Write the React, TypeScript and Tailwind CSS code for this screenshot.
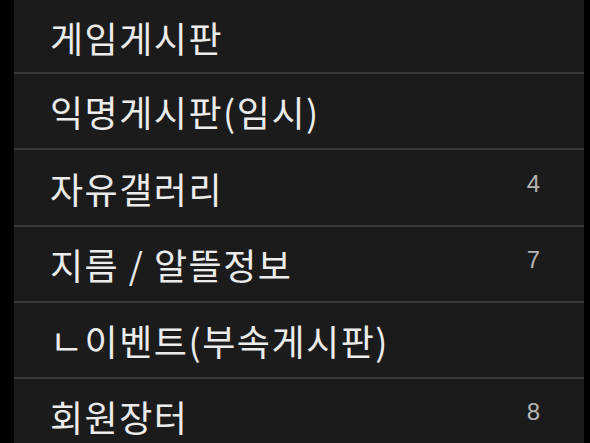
const items: { name: string; count?: number; h: string }[] = [
  { name: '게임게시판', h: 'h-[73px]' },
  { name: '익명게시판(임시)', h: 'h-[76px]' },
  { name: '자유갤러리', count: 4, h: 'h-[77px]' },
  { name: '지름 / 알뜰정보', count: 7, h: 'h-[76px]' },
  { name: 'ㄴ이벤트(부속게시판)', h: 'h-[76px]' },
  { name: '회원장터', count: 8, h: 'h-[76px]' },
]

export default function App() {
  return (
    <div className="w-[590px] h-[443px] overflow-hidden bg-black flex">
      <div className="w-[14px] shrink-0 bg-black" />
      <div className="flex-1 bg-[#1b1b1b] flex flex-col">
        <div className="h-[2px] mt-[1px] bg-[#262626]" />
        {items.map((item) => (
          <div
            key={item.name}
            className={`${item.h} shrink-0 border-b-2 border-[#3a3a3a] flex items-center pl-[36px] pr-[44px]`}
          >
            <span
              className="flex-1 text-[36px] leading-none text-[#ececec] tracking-[1.5px]"
              style={{ fontFamily: '"Noto Sans CJK KR", "Noto Sans", sans-serif' }}
            >
              {item.name}
            </span>
            {item.count !== undefined && (
              <span
                className="text-[24px] leading-none text-[#b4b4b4] -mt-[8px]"
                style={{ fontFamily: '"Liberation Sans", Arial, sans-serif' }}
              >
                {item.count}
              </span>
            )}
          </div>
        ))}
      </div>
      <div className="w-[6px] shrink-0 bg-black" />
    </div>
  )
}
